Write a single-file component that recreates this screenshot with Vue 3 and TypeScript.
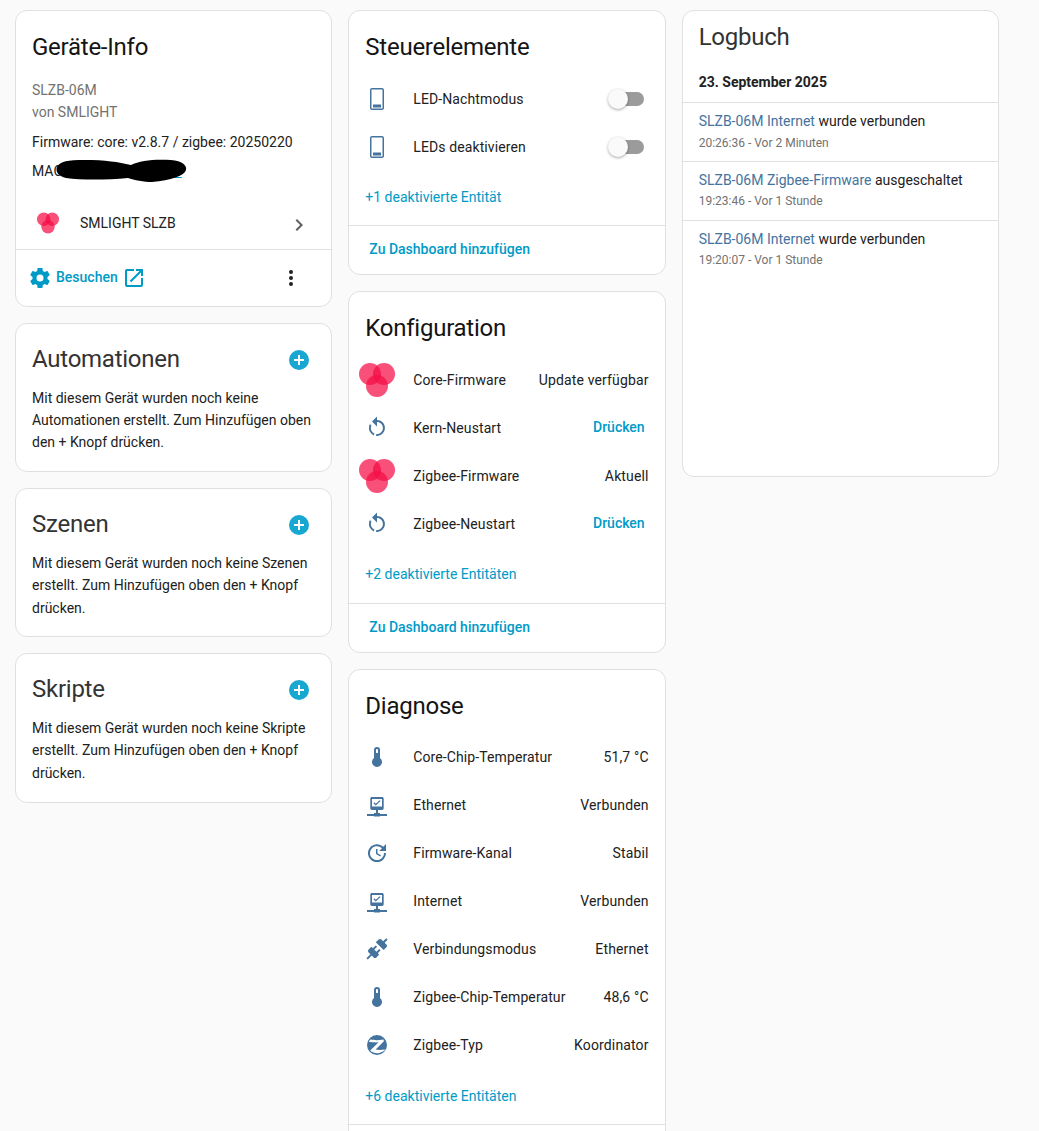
<script setup lang="ts">
const icons: Record<string, string> = {
  phone: 'M7 1H17C18.1 1 19 1.9 19 3V21C19 22.1 18.1 23 17 23H7C5.9 23 5 22.1 5 21V3C5 1.9 5.9 1 7 1M6.5 2.5V21.5H17.5V2.5H6.5M8 17.5H16V20.5H8V17.5Z',
  restart: 'M12,4C14.1,4 16.1,4.8 17.6,6.3C20.7,9.4 20.7,14.5 17.6,17.6C15.8,19.5 13.3,20.2 10.9,19.9L11.4,17.9C13.1,18.1 14.9,17.5 16.2,16.2C18.5,13.9 18.5,10.1 16.2,7.7C15.1,6.6 13.5,6 12,6V10.6L7,5.6L12,0.6V4M6.3,17.6C3.7,15 3.2,11 4.9,7.9L6.4,9.4C5.3,11.6 5.7,14.4 7.6,16.2C8.1,16.7 8.7,17.1 9.4,17.4L8.8,19.4C7.8,19 7,18.4 6.3,17.6Z',
  thermo: 'M15 13V5A3 3 0 0 0 9 5V13A5 5 0 1 0 15 13M12 4A1 1 0 0 1 13 5V8H11V5A1 1 0 0 1 12 4Z',
  network: 'M7 4H17C18 4 18.7 4.7 18.7 5.7V15.3C18.7 16.3 18 17 17 17H13V20H15V21H22V23H15V23.5H9V23H2V21H9V20H11V17H7C6 17 5.3 16.3 5.3 15.3V5.7C5.3 4.7 6 4 7 4M7 6V13.5H17V6H7M15.6 8.1L10.8 12.6L8.4 10.2L9.3 9.3L10.8 10.8L14.7 7.2L15.6 8.1Z',
  update: 'M21,10.12H14.22L16.96,7.3C14.23,4.6 9.81,4.5 7.08,7.2C4.35,9.91 4.35,14.28 7.08,17C9.81,19.7 14.23,19.7 16.96,17C18.32,15.65 19,14.08 19,12.1H21C21,14.08 20.12,16.65 18.36,18.39C14.85,21.87 9.15,21.87 5.64,18.39C2.14,14.92 2.11,9.28 5.62,5.81C9.13,2.34 14.76,2.34 18.27,5.81L21,3V10.12M12.5,8V12.25L16,14.33L15.28,15.54L11,13V8H12.5Z',
  connection: 'M21.4 7.5C22.2 8.3 22.2 9.6 21.4 10.3L18.6 13.1L10.8 5.3L13.6 2.5C14.4 1.7 15.7 1.7 16.4 2.5L18.2 4.3L21.2 1.3L22.6 2.7L19.6 5.7L21.4 7.5M15.6 13.3L14.2 11.9L11.4 14.7L9.3 12.6L12.1 9.8L10.7 8.4L7.9 11.2L6.4 9.8L3.6 12.6C2.8 13.4 2.8 14.7 3.6 15.4L5.4 17.2L1.4 21.2L2.8 22.6L6.8 18.6L8.6 20.4C9.4 21.2 10.7 21.2 11.4 20.4L14.2 17.6L12.8 16.2L15.6 13.3Z',
  zigbee: 'M12 2A10 10 0 1 0 12 22A10 10 0 1 0 12 2ZM5.5 6.6C8.5 7.3 13.5 7.5 18.5 6.6L18.9 8.2L10.6 16.6C13.5 17 17 17 20.6 16.4C19.5 17.6 16 20 12 20.3C10 20.3 7 19.4 5.2 17.6L13.6 9.3C11 9.5 6.5 9.3 3.8 8.8C4.2 8 4.8 7.2 5.5 6.6Z',
}

const automationCards = [
  { title: 'Automationen', text: 'Mit diesem Gerät wurden noch keine Automationen erstellt. Zum Hinzufügen oben den + Knopf drücken.' },
  { title: 'Szenen', text: 'Mit diesem Gerät wurden noch keine Szenen erstellt. Zum Hinzufügen oben den + Knopf drücken.' },
  { title: 'Skripte', text: 'Mit diesem Gerät wurden noch keine Skripte erstellt. Zum Hinzufügen oben den + Knopf drücken.' },
]

type Row = { icon: string; name: string; value?: string; action?: string; toggle?: boolean }
type EntityCard = { title: string; rows: Row[]; more: string }

const entityCards: EntityCard[] = [
  {
    title: 'Steuerelemente',
    more: '+1 deaktivierte Entität',
    rows: [
      { icon: 'phone', name: 'LED-Nachtmodus', toggle: true },
      { icon: 'phone', name: 'LEDs deaktivieren', toggle: true },
    ],
  },
  {
    title: 'Konfiguration',
    more: '+2 deaktivierte Entitäten',
    rows: [
      { icon: 'logo', name: 'Core-Firmware', value: 'Update verfügbar' },
      { icon: 'restart', name: 'Kern-Neustart', action: 'Drücken' },
      { icon: 'logo', name: 'Zigbee-Firmware', value: 'Aktuell' },
      { icon: 'restart', name: 'Zigbee-Neustart', action: 'Drücken' },
    ],
  },
  {
    title: 'Diagnose',
    more: '+6 deaktivierte Entitäten',
    rows: [
      { icon: 'thermo', name: 'Core-Chip-Temperatur', value: '51,7 °C' },
      { icon: 'network', name: 'Ethernet', value: 'Verbunden' },
      { icon: 'update', name: 'Firmware-Kanal', value: 'Stabil' },
      { icon: 'network', name: 'Internet', value: 'Verbunden' },
      { icon: 'connection', name: 'Verbindungsmodus', value: 'Ethernet' },
      { icon: 'thermo', name: 'Zigbee-Chip-Temperatur', value: '48,6 °C' },
      { icon: 'zigbee', name: 'Zigbee-Typ', value: 'Koordinator' },
    ],
  },
]

const logEntries = [
  { entity: 'SLZB-06M Internet', action: 'wurde verbunden', time: '20:26:36 - Vor 2 Minuten' },
  { entity: 'SLZB-06M Zigbee-Firmware', action: 'ausgeschaltet', time: '19:23:46 - Vor 1 Stunde' },
  { entity: 'SLZB-06M Internet', action: 'wurde verbunden', time: '19:20:07 - Vor 1 Stunde' },
]
</script>

<template>
  <div class="page">
    <div class="column">
      <section class="card">
        <h1 class="card-title">Geräte-Info</h1>
        <div class="info">
          <div class="muted">SLZB-06M</div>
          <div class="muted">von SMLIGHT</div>
          <div class="firmware">Firmware: core: v2.8.7 / zigbee: 20250220</div>
          <div class="mac">
            MAC: <span class="mac-link">00:00:00:00:00:00</span>
            <svg class="scribble" viewBox="0 0 130 24">
              <path d="M1 8C4 2 12 1 28 1C50 1 62 3 75 6C84 1 100 0 115 1C126 2 131 6 130 11C128 17 115 21 96 23C88 23 78 21 72 19C50 21 25 21 10 19C3 17 -1 13 1 8Z" />
            </svg>
          </div>
        </div>
        <div class="device-row">
          <svg class="device-logo" viewBox="0 0 36 36">
            <circle class="lobe" cx="11" cy="12" r="11" />
            <circle class="lobe" cx="25" cy="12" r="11" />
            <circle class="lobe" cx="18" cy="24" r="11" />
          </svg>
          <span class="device-name">SMLIGHT SLZB</span>
          <svg class="chevron" viewBox="0 0 24 24"><path d="M8.59,16.58L13.17,12L8.59,7.41L10,6L16,12L10,18L8.59,16.58Z" /></svg>
        </div>
        <div class="device-actions">
          <svg class="gear" viewBox="0 0 24 24"><path d="M12,15.5A3.5,3.5 0 0,1 8.5,12A3.5,3.5 0 0,1 12,8.5A3.5,3.5 0 0,1 15.5,12A3.5,3.5 0 0,1 12,15.5M19.43,12.97C19.47,12.65 19.5,12.33 19.5,12C19.5,11.67 19.47,11.34 19.43,11L21.54,9.37C21.73,9.22 21.78,8.95 21.66,8.73L19.66,5.27C19.54,5.05 19.27,4.96 19.05,5.05L16.56,6.05C16.04,5.66 15.5,5.32 14.87,5.07L14.5,2.42C14.46,2.18 14.25,2 14,2H10C9.75,2 9.54,2.18 9.5,2.42L9.13,5.07C8.5,5.32 7.96,5.66 7.44,6.05L4.95,5.05C4.73,4.96 4.46,5.05 4.34,5.27L2.34,8.73C2.21,8.95 2.27,9.22 2.46,9.37L4.57,11C4.53,11.34 4.5,11.67 4.5,12C4.5,12.33 4.53,12.65 4.57,12.97L2.46,14.63C2.27,14.78 2.21,15.05 2.34,15.27L4.34,18.73C4.46,18.95 4.73,19.03 4.95,18.95L7.44,17.94C7.96,18.34 8.5,18.68 9.13,18.93L9.5,21.58C9.54,21.82 9.75,22 10,22H14C14.25,22 14.46,21.82 14.5,21.58L14.87,18.93C15.5,18.67 16.04,18.34 16.56,17.94L19.05,18.95C19.27,19.03 19.54,18.95 19.66,18.73L21.66,15.27C21.78,15.05 21.73,14.78 21.54,14.63L19.43,12.97Z" /></svg>
          <span class="visit">Besuchen</span>
          <svg class="open-new" viewBox="0 0 24 24"><path d="M14,3V5H17.59L7.76,14.83L9.17,16.24L19,6.41V10H21V3M19,19H5V5H12V3H5C3.89,3 3,3.9 3,5V19A2,2 0 0,0 5,21H19A2,2 0 0,0 21,19V12H19V19Z" /></svg>
          <svg class="dots" viewBox="0 0 24 24"><path d="M12,16A2,2 0 0,1 14,18A2,2 0 0,1 12,20A2,2 0 0,1 10,18A2,2 0 0,1 12,16M12,10A2,2 0 0,1 14,12A2,2 0 0,1 12,14A2,2 0 0,1 10,12A2,2 0 0,1 12,10M12,4A2,2 0 0,1 14,6A2,2 0 0,1 12,8A2,2 0 0,1 10,6A2,2 0 0,1 12,4Z" /></svg>
        </div>
      </section>

      <section v-for="item in automationCards" :key="item.title" class="card automation">
        <div class="automation-head">
          <h2 class="automation-title">{{ item.title }}</h2>
          <svg class="add" viewBox="0 0 24 24"><path d="M17,13H13V17H11V13H7V11H11V7H13V11H17M12,2A10,10 0 0,0 2,12A10,10 0 0,0 12,22A10,10 0 0,0 22,12A10,10 0 0,0 12,2Z" /></svg>
        </div>
        <p class="automation-text">{{ item.text }}</p>
      </section>
    </div>

    <div class="column">
      <section v-for="card in entityCards" :key="card.title" class="card">
        <h1 class="card-title">{{ card.title }}</h1>
        <div class="rows">
          <div v-for="row in card.rows" :key="row.name" class="row">
            <svg v-if="row.icon === 'logo'" class="row-logo" viewBox="0 0 36 36">
              <circle class="lobe" cx="11" cy="12" r="11" />
              <circle class="lobe" cx="25" cy="12" r="11" />
              <circle class="lobe" cx="18" cy="24" r="11" />
            </svg>
            <svg v-else class="row-icon" viewBox="0 0 24 24"><path :d="icons[row.icon]" fill-rule="evenodd" /></svg>
            <span class="row-name">{{ row.name }}</span>
            <span v-if="row.value" class="row-value">{{ row.value }}</span>
            <span v-if="row.action" class="row-action">{{ row.action }}</span>
            <span v-if="row.toggle" class="toggle"><span class="knob"></span></span>
          </div>
        </div>
        <div class="more">{{ card.more }}</div>
        <div class="card-footer">Zu Dashboard hinzufügen</div>
      </section>
    </div>

    <div class="column">
      <section class="card logbook">
        <h2 class="logbook-title">Logbuch</h2>
        <div class="log-date">23. September 2025</div>
        <div v-for="(entry, i) in logEntries" :key="i" class="log-entry">
          <div class="log-line"><span class="log-entity">{{ entry.entity }}</span> {{ entry.action }}</div>
          <div class="log-time">{{ entry.time }}</div>
        </div>
      </section>
    </div>
  </div>
</template>

<style scoped>
.page {
  display: grid;
  grid-template-columns: repeat(3, 317.33px);
  column-gap: 16px;
  align-items: start;
  box-sizing: border-box;
  height: 1131px;
  overflow: hidden;
  padding: 10px 0 0 15px;
  background: #fafafa;
  color: #212121;
  font-family: Roboto, "Liberation Sans", sans-serif;
  font-size: 14px;
}

.column {
  display: flex;
  flex-direction: column;
  gap: 16px;
  min-width: 0;
}

.card {
  flex: none;
  box-sizing: border-box;
  background: #fff;
  border: 1px solid #e0e0e0;
  border-radius: 12px;
}

.card-title {
  margin: 0;
  padding: 20px 16px 0;
  font-size: 24px;
  font-weight: 400;
  line-height: 32px;
  letter-spacing: -0.25px;
  color: #141414;
}

/* device info */
.info {
  padding: 15.5px 16px 0;
  line-height: 20px;
}

.muted {
  color: #727272;
  line-height: 22px;
}

.firmware {
  margin-top: 9.5px;
}

.mac {
  position: relative;
  margin-top: 9px;
  line-height: 20px;
}

.mac-link {
  margin-left: 1px;
  color: transparent;
  text-decoration: underline;
  text-decoration-color: #009ac7;
}

.scribble {
  position: absolute;
  left: 24px;
  top: -2px;
  width: 130px;
  height: 24px;
  fill: #000;
  overflow: visible;
}

.device-row {
  display: flex;
  align-items: center;
  height: 48px;
  margin-top: 18px;
  padding-left: 21px;
  padding-right: 20px;
}

.device-logo {
  width: 22px;
  height: 22px;
  flex: none;
}

.lobe {
  fill: #f50c45;
  fill-opacity: 0.72;
}

.device-name {
  margin-left: 21px;
  flex: 1;
}

.chevron {
  width: 24px;
  height: 24px;
  fill: #5f5f5f;
  margin-top: 4px;
}

.device-actions {
  display: flex;
  align-items: center;
  height: 56px;
  border-top: 1px solid #e0e0e0;
  margin-top: 2px;
  padding-left: 12px;
}

.gear {
  width: 24px;
  height: 24px;
  fill: #009ac7;
  flex: none;
}

.visit {
  margin-left: 4px;
  margin-bottom: 2px;
  color: #009ac7;
  font-weight: 500;
}

.open-new {
  width: 24px;
  height: 24px;
  fill: #009ac7;
  margin-left: 4px;
}

.dots {
  width: 24px;
  height: 24px;
  fill: #212121;
  margin-left: auto;
  margin-right: 28px;
}

/* automations, scenes, scripts */
.automation-head {
  display: flex;
  align-items: center;
  justify-content: space-between;
  padding: 19px 20px 0 16px;
}

.automation-title {
  margin: 0;
  font-size: 24px;
  font-weight: 400;
  line-height: 32px;
  letter-spacing: -0.25px;
  color: #333;
}

.add {
  width: 24px;
  height: 24px;
  margin-top: 2px;
  fill: #18a7d1;
}

.automation-text {
  margin: 11.6px 0 0;
  padding: 0 16px 17.4px;
  line-height: 22.4px;
}

/* entity cards */
.rows {
  padding: 11.6px 0 0;
}

.row {
  display: flex;
  align-items: center;
  height: 48px;
  padding: 0 16px 0 8px;
}

.row-icon {
  flex: none;
  width: 24px;
  height: 24px;
  margin: 0 8px;
  fill: #44739e;
}

.row-logo {
  flex: none;
  width: 36px;
  height: 36px;
  margin: 0 2px;
}

.row-name {
  flex: 1;
  margin-left: 16px;
  letter-spacing: 0.1px;
}

.row-value {
  letter-spacing: 0.15px;
}

.row-action {
  color: #009ac7;
  font-weight: 500;
  margin-right: 4px;
  margin-bottom: 2px;
}

.toggle {
  position: relative;
  width: 26px;
  height: 14px;
  margin-right: 5px;
  border-radius: 7px;
  background: #9b9b9b;
}

.knob {
  position: absolute;
  left: -10px;
  top: -3px;
  width: 20px;
  height: 20px;
  border-radius: 50%;
  background: #fafafa;
  box-shadow: 0 1px 3px rgba(0, 0, 0, 0.35);
}

.more {
  padding: 16.4px 16px 18.4px;
  line-height: 20px;
  color: #009ac7;
}

.card-footer {
  height: 48px;
  padding-left: 20px;
  border-top: 1px solid #e0e0e0;
  line-height: 46px;
  color: #009ac7;
  font-weight: 500;
}

/* logbook */
.logbook {
  height: 467px;
}

.logbook-title {
  margin: 0;
  padding: 10px 16px 0;
  font-size: 24px;
  font-weight: 400;
  line-height: 32px;
  letter-spacing: -0.25px;
  color: #333;
}

.log-date {
  padding: 19px 16px 10px;
  font-weight: 700;
  line-height: 20px;
}

.log-entry {
  height: 58.8px;
  padding: 8px 16px 0;
  border-top: 1px solid #e0e0e0;
  box-sizing: border-box;
}

.log-line {
  line-height: 20px;
}

.log-entity {
  color: #44739e;
}

.log-time {
  margin-top: 1.6px;
  font-size: 12px;
  line-height: 20px;
  color: #727272;
}
</style>

<style>
body {
  background: #fafafa;
}
</style>
